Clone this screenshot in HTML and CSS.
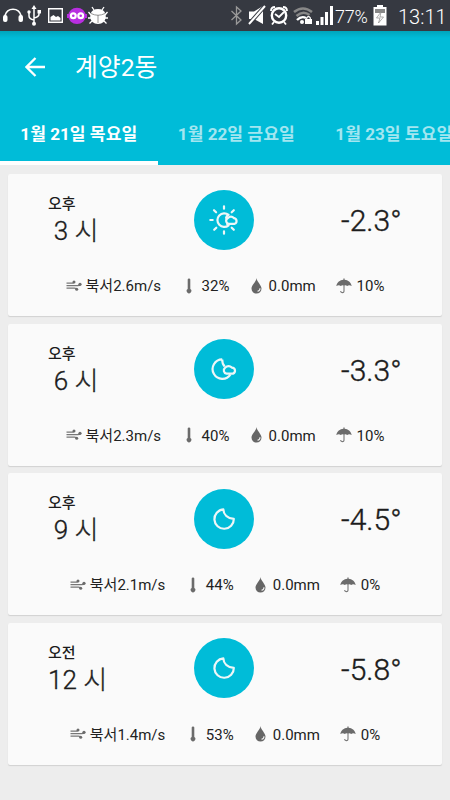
FILE: index.html
```
<!DOCTYPE html>
<html lang="ko">
<head>
<meta charset="utf-8">
<title>계양2동</title>
<link rel="stylesheet" href="styles.css">
</head>
<body>
<svg class="defs" aria-hidden="true">
  <symbol id="wind" viewBox="0 0 16 12"><g fill="none" stroke="#777" stroke-width="1.3"><path d="M.5 3.2H6Q8 3.2 8 1.5M.5 5.7H11.5Q14 5.7 14.5 4M.5 8.2H8.5Q10.5 8.2 10.5 9.5"/></g><g fill="#6b6b6b"><circle cx="8" cy="2" r="1.5"/><circle cx="14" cy="4.3" r="1.6"/><circle cx="10.7" cy="9.2" r="1.5"/></g></symbol>
  <symbol id="thermo" viewBox="0 0 6 16"><path d="M1.7 1.5Q1.7.5 3 .5T4.3 1.5V11A2.3 2.3 0 1 1 1.7 11Z" fill="#6b6b6b"/></symbol>
  <symbol id="drop" viewBox="0 0 11 16"><path d="M5.5 0C5.8 4 10.5 6.8 10.5 10.6A5 5 0 0 1 .5 10.6C.5 6.8 5.2 4 5.5 0Z" fill="#666"/><path d="M9 10.2Q9 12.9 6.5 13.3" fill="none" stroke="#f2f2f2" stroke-width="1.1"/></symbol>
  <symbol id="umbrella" viewBox="0 0 16 16"><path d="M.3 8C1 4.5 4 2 7.4 1.8V.5H8.6V1.8C12 2 15 4.5 15.7 8Q13 6.4 11.2 8Q9.7 6.8 8 7.6Q6.3 6.8 4.8 8Q3 6.4 .3 8Z" fill="#6b6b6b"/><path d="M8 7V13Q8 14.7 6.2 14.6Q4.7 14.5 4.6 13" fill="none" stroke="#777" stroke-width="1.1"/></symbol>
  <symbol id="moon" viewBox="0 0 30 30"><path d="M14.3 5.4C14.6 10.5 18.5 14.4 24.8 14.9A9.7 9.7 0 1 1 14.3 5.4Z" fill="none" stroke="#eef6f7" stroke-width="2.2" stroke-linejoin="round"/></symbol>
  <symbol id="cloudmoon" viewBox="0 0 30 30"><path d="M13.2 5.4A9.7 9.7 0 1 0 21.5 20.3M13.2 5.4Q13 9.5 15.7 12.5" fill="none" stroke="#eef6f7" stroke-width="2.2" stroke-linejoin="round"/><path d="M17.5 19.6A3.3 3.3 0 0 1 16 13.8Q19.5 10.4 23 13.6A3.1 3.1 0 0 1 24 19.6Z" fill="none" stroke="#eef6f7" stroke-width="2.2"/></symbol>
  <symbol id="sun" viewBox="0 0 30 30"><g fill="none" stroke="#eef6f7" stroke-width="2.2" stroke-linecap="round"><path d="M15 1.3V3.7M15 26.3V28.7M1.3 15H3.7M5 5.2L7.1 7.3M24.8 5.2L22.7 7.3M5.2 24.8L7.3 22.7M24.8 24.8L22.7 22.7M19.6 9.9A6.8 6.8 0 1 0 19.6 20.3M19.2 9.9Q17.3 11.4 17.1 13M19.2 20.3L18.2 19"/><path d="M19.8 18.8A3 3 0 0 1 18.7 13.2Q22 10 25.1 13.2A2.9 2.9 0 0 1 25.6 18.8Z"/></g></symbol>
</svg>
<div class="status">
  <svg class="status-icons" width="112" height="31" viewBox="0 0 112 31">
    <path d="M5 19V15.5A8.3 8.6 0 0 1 21 15.5V19" fill="none" stroke="#fff" stroke-width="1.6"/><rect x="3" y="15" width="4.5" height="7" rx="2" fill="#fff"/><rect x="18.5" y="15" width="4.5" height="7" rx="2" fill="#fff"/>
    <path d="M34 8V24M29 12V16Q29 19 34 20M39 11V14Q39 17 34 18" fill="none" stroke="#fff" stroke-width="1.5"/><path d="M31.5 9L34 5L36.5 9Z" fill="#fff"/><g fill="#fff"><circle cx="34" cy="23.7" r="2"/><circle cx="29" cy="12" r="1.7"/><path d="M37.5 10H41V13.5H37.5Z"/></g>
    <path d="M48.7 8.7H62.3V22.3H48.7Z" fill="none" stroke="#fff" stroke-width="1.4"/><path d="M50.5 20.5V17L53.5 15L56 17L58 16L60.5 18V20.5Z" fill="#fff"/>
    <ellipse cx="77" cy="15.9" rx="8.7" ry="8.2" fill="#b82ee0"/><path d="M67 14H87V18H67Z" fill="#b82ee0"/><g fill="#b82ee0" stroke="#fff" stroke-width="2.2"><circle cx="73.3" cy="15.7" r="2.4"/><circle cx="80.7" cy="15.7" r="2.4"/></g>
    <path d="M90.5 14Q92 9 98 9T105.5 14L105.8 17Q105 24 98 24T90.2 17Z" fill="#fff"/><path d="M94 10L92 7M102 10L104 7M91 15L88.5 12M105 15L107.5 12M91 18H88M105 18H108M92 21L89.5 23.5M104 21L106.5 23.5" stroke="#fff" stroke-width="1.3"/><path d="M91 13.5Q98 17 105 13.5M98 15V23" fill="none" stroke="#777" stroke-width=".8"/>
  </svg>
  <svg class="status-icons" width="110" height="31" viewBox="225 0 110 31">
    <path d="M231.5 11L241 20L236.5 24V7L241 11L231.5 20" fill="none" stroke="#999" stroke-width="1.3"/>
    <path d="M249 11.5H254L263 6V24L254 19H249Z" fill="#fff"/><path d="M249 24L265 6" stroke="#363941" stroke-width="4"/><path d="M249 24L265 6" stroke="#fff" stroke-width="2"/>
    <circle cx="279" cy="15.5" r="7.2" fill="none" stroke="#fff" stroke-width="2.4"/><path d="M275 14L279 17L284 12M274 22L272 24.5M284 22L286 24.5M271 11Q271 7 275 7M283 7Q287 7 287 11" fill="none" stroke="#fff" stroke-width="1.8"/>
    <path d="M294 12Q303 5 312 12M296.5 16Q303 10 309.5 15" fill="none" stroke="#888" stroke-width="2.6"/><path d="M297 20Q301.5 15.5 306 18" fill="none" stroke="#fff" stroke-width="2.4"/><circle cx="302" cy="22" r="2" fill="#fff"/><path d="M305 19H312V24H305Z" fill="#fff"/><path d="M306.7 20V17.8Q308.5 15.5 310.3 17.8V20" fill="none" stroke="#fff" stroke-width="1.2"/>
    <path d="M316 21H319V25H316ZM320.5 17H323.5V25H320.5ZM325 12H328V25H325ZM330 6H333V25H330Z" fill="#fff"/>
  </svg>
  <span class="percent">77%</span>
  <svg class="battery" width="14" height="21" viewBox="0 0 14 21"><path d="M4 0H10V2H13.5V20.5H.5V2H4Z" fill="#fff"/><path d="M2 4H12V8H2Z" fill="#888"/><path d="M8 7L3.5 13H7L5.5 18L10.5 12H7Z" fill="#fff" stroke="#888" stroke-width=".7"/></svg>
  <time class="clock">13:11</time>
</div>
<header class="appbar">
  <div class="toolbar">
    <svg width="20" height="20" viewBox="0 0 20 20"><path d="M20 10H1.5M10.5 1L1.5 10L10.5 19" fill="none" stroke="#fff" stroke-width="2.3"/></svg>
    <h1 class="title">계양2동</h1>
  </div>
  <nav class="tabs">
    <div class="tab active"><span>1월 21일 목요일</span></div>
    <div class="tab"><span>1월 22일 금요일</span></div>
    <div class="tab"><span>1월 23일 토요일</span></div>
  </nav>
</header>
<main class="list">
  <article class="card">
    <div class="main">
      <div class="time"><span class="ampm">오후</span><span class="hour">3 시</span></div>
      <div class="disc"><svg><use href="#sun"/></svg></div>
      <div class="temp">-2.3°</div>
    </div>
    <div class="details"><svg class="wind"><use href="#wind"/></svg><span class="w">북서2.6m/s</span><svg class="thermo"><use href="#thermo"/></svg><span class="h">32%</span><svg class="drop"><use href="#drop"/></svg><span class="r">0.0mm</span><svg class="umbrella"><use href="#umbrella"/></svg><span class="p">10%</span></div>
  </article>
  <article class="card">
    <div class="main">
      <div class="time"><span class="ampm">오후</span><span class="hour">6 시</span></div>
      <div class="disc"><svg><use href="#cloudmoon"/></svg></div>
      <div class="temp">-3.3°</div>
    </div>
    <div class="details"><svg class="wind"><use href="#wind"/></svg><span class="w">북서2.3m/s</span><svg class="thermo"><use href="#thermo"/></svg><span class="h">40%</span><svg class="drop"><use href="#drop"/></svg><span class="r">0.0mm</span><svg class="umbrella"><use href="#umbrella"/></svg><span class="p">10%</span></div>
  </article>
  <article class="card">
    <div class="main">
      <div class="time"><span class="ampm">오후</span><span class="hour">9 시</span></div>
      <div class="disc"><svg><use href="#moon"/></svg></div>
      <div class="temp">-4.5°</div>
    </div>
    <div class="details"><svg class="wind"><use href="#wind"/></svg><span class="w">북서2.1m/s</span><svg class="thermo"><use href="#thermo"/></svg><span class="h">44%</span><svg class="drop"><use href="#drop"/></svg><span class="r">0.0mm</span><svg class="umbrella"><use href="#umbrella"/></svg><span class="p">0%</span></div>
  </article>
  <article class="card">
    <div class="main">
      <div class="time"><span class="ampm">오전</span><span class="hour">12 시</span></div>
      <div class="disc"><svg><use href="#moon"/></svg></div>
      <div class="temp">-5.8°</div>
    </div>
    <div class="details"><svg class="wind"><use href="#wind"/></svg><span class="w">북서1.4m/s</span><svg class="thermo"><use href="#thermo"/></svg><span class="h">53%</span><svg class="drop"><use href="#drop"/></svg><span class="r">0.0mm</span><svg class="umbrella"><use href="#umbrella"/></svg><span class="p">0%</span></div>
  </article>
</main>
</body>
</html>
```
FILE: styles.css
```
* { box-sizing: border-box; }
body { margin: 0; width: 450px; height: 800px; overflow: hidden; background: #ededed; color: #1c1c1c; font-family: Roboto, "Noto Sans CJK KR", sans-serif; }
svg { display: block; flex: none; }
.defs { position: absolute; width: 0; height: 0; }
.status { height: 31px; background: #363941; display: flex; align-items: center; color: #fff; }
.status-icons + .status-icons { margin-left: 113px; }
.percent { width: 36px; font-size: 18px; font-weight: 300; line-height: 31px; padding-top: 2px; white-space: nowrap; letter-spacing: -.2px; }
.battery { margin-left: 2px; }
.clock { margin-left: 11px; font-size: 20px; font-weight: 300; line-height: 31px; padding-top: 3px; }
.appbar { height: 134px; background: linear-gradient(#00a5bb, #00bcd8 7px); color: #fff; }
.toolbar { height: 72px; display: flex; align-items: center; padding-left: 25px; }
.title { margin: 1px 0 0 30px; font-size: 24.8px; line-height: 36px; font-weight: 400; white-space: nowrap; }
.tabs { display: flex; height: 62px; overflow: hidden; }
.tab { flex: none; width: 157.5px; height: 62px; padding-top: 19px; text-align: center; font-size: 17.15px; line-height: 24px; font-weight: 700; white-space: nowrap; color: #a3e6f0; }
.tab.active { color: #fff; border-bottom: 4px solid #fff; }
.list { padding: 9px 8px 0; display: flex; flex-direction: column; gap: 7.5px; }
.card { height: 142px; background: #fafafa; border-radius: 2px; box-shadow: 0 1px 1px rgba(0,0,0,.12); }
.main { height: 92px; display: grid; grid-template-columns: 186.4px 60px 1fr; }
.time { padding: 20px 0 0 40px; display: flex; flex-direction: column; }
.ampm { font-size: 15px; line-height: 20px; font-weight: 500; }
.hour { width: 56px; text-align: center; font-size: 26px; line-height: 34px; font-weight: 300; white-space: nowrap; -webkit-text-stroke: .35px #1c1c1c; }
.disc { width: 60px; height: 60px; margin-top: 15.5px; border-radius: 50%; background: #00bcd8; display: grid; place-items: center; }
.disc svg { width: 30px; height: 30px; }
.temp { padding: 27px 40.5px 0 0; text-align: right; font-size: 30px; line-height: 40px; font-weight: 300; -webkit-text-stroke: .4px #1c1c1c; }
.details { height: 40px; display: flex; justify-content: center; align-items: center; font-size: 15px; line-height: 20px; color: #222; white-space: nowrap; }
.wind { width: 16px; height: 12px; margin: 0 4px 1px 0; }
.w { width: 75px; }
.thermo { width: 6px; height: 16px; margin: 0 10px 1px 25px; }
.h { width: 28px; }
.drop { width: 11px; height: 16px; margin: 0 7px 1px 21px; }
.r { width: 47px; }
.umbrella { width: 16px; height: 16px; margin: 0 5px 1px 20px; }
```
